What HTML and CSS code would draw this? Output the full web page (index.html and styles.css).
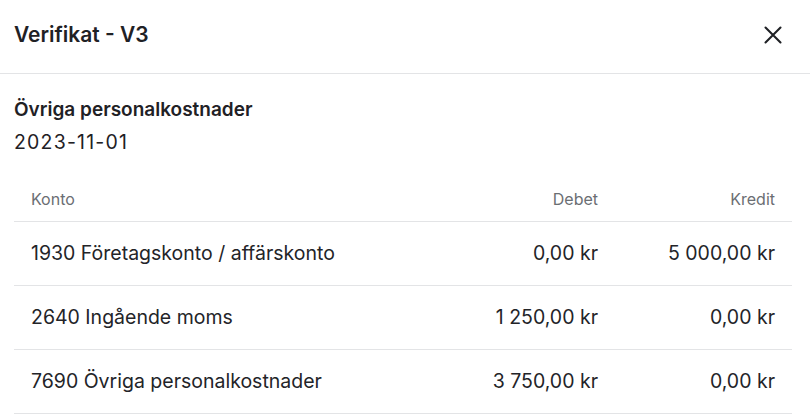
FILE: index.html
```html
<!DOCTYPE html>
<html lang="sv">
<head>
<meta charset="utf-8">
<title>Verifikat - V3</title>
<link rel="stylesheet" href="styles.css">
</head>
<body>
<div class="modal">
  <header class="modal-header">
    <h1 class="modal-title">Verifikat - V3</h1>
    <button class="close-btn" aria-label="Stäng">
      <svg width="18" height="18" viewBox="0 0 18 18" fill="none" stroke="#1f2125" stroke-width="2.1" stroke-linecap="round"><path d="M1.5 1.5L16.5 16.5M16.5 1.5L1.5 16.5"/></svg>
    </button>
  </header>
  <section class="modal-body">
    <h2 class="entry-title">Övriga personalkostnader</h2>
    <div class="entry-date">2023-11-01</div>
    <table class="ledger">
      <thead>
        <tr><th class="col-account">Konto</th><th class="num">Debet</th><th class="num">Kredit</th></tr>
      </thead>
      <tbody>
        <tr><td>1930 Företagskonto / affärskonto</td><td class="num">0,00 kr</td><td class="num">5 000,00 kr</td></tr>
        <tr><td>2640 Ingående moms</td><td class="num">1 250,00 kr</td><td class="num">0,00 kr</td></tr>
        <tr><td>7690 Övriga personalkostnader</td><td class="num">3 750,00 kr</td><td class="num">0,00 kr</td></tr>
      </tbody>
    </table>
  </section>
</div>
</body>
</html>
```
FILE: styles.css
```css
* { box-sizing: border-box; }
html, body { margin: 0; padding: 0; background: #fff; }
body { font-family: Inter, "Noto Sans", sans-serif; color: #1f2125; }
.modal { width: 810px; }
.modal-header {
  height: 74px;
  display: flex;
  align-items: center;
  justify-content: space-between;
  padding: 0 14px 4px 14px;
  border-bottom: 1px solid #e3e4e6;
}
.modal-title { margin: 0; font-size: 21px; font-weight: 600; letter-spacing: 0; }
.close-btn { border: 0; background: none; padding: 0; width: 18px; height: 18px; margin-right: 14px; display: flex; }
.modal-body { padding: 23px 18px 0 14px; }
.entry-title { margin: 0; font-size: 19px; font-weight: 600; line-height: 26px; }
.entry-date { margin-top: 6px; font-size: 19.5px; line-height: 26px; letter-spacing: 1.2px; }
.ledger { width: 100%; border-collapse: collapse; margin-top: 26px; }
.ledger th {
  font-size: 16px; font-weight: 400; color: #6b6e73;
  text-align: left; padding: 0 17px; height: 40px; vertical-align: top; padding-top: 8px;
  border-bottom: 1px solid #e3e4e6;
}
.ledger td {
  font-size: 19.5px; height: 64px; padding: 0 17px; color: #232428;
  border-bottom: 1px solid #e3e4e6;
}
.ledger .num { text-align: right; }
.ledger th.num:nth-child(2), .ledger td.num:nth-child(2) { width: 190px; }
.ledger th.num:nth-child(3), .ledger td.num:nth-child(3) { width: 177px; }
```
